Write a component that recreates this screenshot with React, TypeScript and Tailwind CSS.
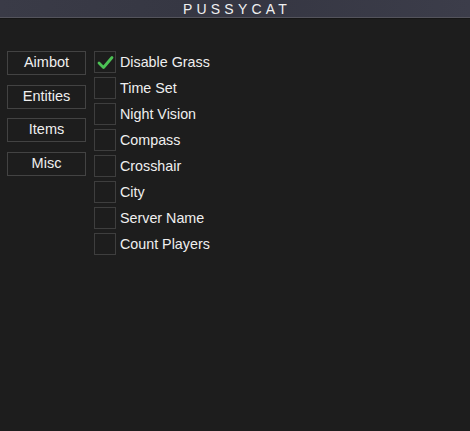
import React from "react";

const tabs = ["Aimbot", "Entities", "Items", "Misc"];
const opts = [
  { label: "Disable Grass", checked: true },
  { label: "Time Set", checked: false },
  { label: "Night Vision", checked: false },
  { label: "Compass", checked: false },
  { label: "Crosshair", checked: false },
  { label: "City", checked: false },
  { label: "Server Name", checked: false },
  { label: "Count Players", checked: false },
];

export default function App() {
  return (
    <div
      className="w-[470px] h-[431px] bg-[#1d1d1d] flex flex-col overflow-hidden"
      style={{ fontFamily: '"Liberation Sans", Arial, sans-serif' }}
    >
      <div className="h-[18px] bg-gradient-to-r from-[#3a3b47] via-[#353642] to-[#3c3d4a] flex items-center justify-center border-b border-[#54545c]">
        <span className="text-[14px] leading-none tracking-[4.2px] text-[#f0f0f0] pl-[4px] pt-[1px]">
          PUSSYCAT
        </span>
      </div>
      <div className="h-[1px] bg-[#161616]" />
      <div className="flex gap-[8px] pl-[7px] pt-[32px]">
        <div className="flex flex-col gap-[9.5px]">
          {tabs.map((t) => (
            <div
              key={t}
              className="w-[79px] h-[24px] border border-[#434343] flex items-center justify-center text-[14.5px] text-[#efefef]"
            >
              {t}
            </div>
          ))}
        </div>
        <div className="flex flex-col gap-[4px]">
          {opts.map((o) => (
            <div key={o.label} className="flex items-center gap-[4px] h-[22px]">
              <div className="w-[22px] h-[22px] border border-[#3e3e3e] flex items-center justify-center">
                {o.checked && (
                  <svg width="17" height="15" viewBox="0 0 17 15">
                    <path
                      d="M2 8 L6.5 12.5 L15 2.5"
                      fill="none"
                      stroke="#4cc255"
                      strokeWidth="2.8"
                      strokeLinecap="round"
                      strokeLinejoin="round"
                    />
                  </svg>
                )}
              </div>
              <span className="text-[14.3px] text-[#efefef] pt-[2px]">{o.label}</span>
            </div>
          ))}
        </div>
      </div>
    </div>
  );
}
